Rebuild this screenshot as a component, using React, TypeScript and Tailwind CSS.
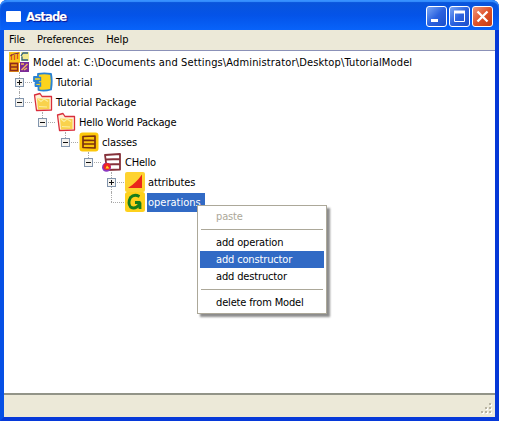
import React from "react";

type Kind = "root" | "component" | "folder" | "classes" | "klass" | "attributes" | "operations";

function Icon({ kind }: { kind: Kind }) {
  return (
    <svg className="h-5 w-5 shrink-0 overflow-visible" viewBox="0 0 20 20" fill="none">
      {kind === "root" && (
        <>
          <rect x="0" y="0" width="11" height="11" fill="#f8c61c" />
          <path d="M2.5 2v6M5.5 3v5M8.5 1v6" stroke="#d8561c" strokeWidth="1.3" />
          <path d="M1 4l4-2 5-1" stroke="#7a2a4c" />
          <rect x="12" y="0" width="8" height="9" fill="#f4ea90" />
          <path d="M19 1h-5l-2 3M13 4.5v3.5h6" stroke="#31607f" strokeWidth="1.3" />
          <rect x="0" y="10" width="10" height="10" fill="#ee9a16" />
          <path d="M1 11.5h8M1 15h8M1 18.5h8M1.5 11v8M8.5 11v8" stroke="#8c2a1c" strokeWidth="1.3" />
          <rect x="11" y="10" width="9" height="10" fill="#7a2a98" />
          <path d="M12 12h3M12.5 18l6-6M15 18l3-2" stroke="#f2b560" strokeWidth="1.5" />
        </>
      )}
      {kind === "component" && (
        <>
          <path d="M5 2Q11 .8 18 2Q19.5 9 18 17.5Q11 19.5 5.5 18V14H2.5V11H5V9H1V5H5Z" fill="#fbd31d" stroke="#2882d5" strokeWidth="1.8" strokeLinejoin="round" />
          <path d="M1.5 5.5h6v3h-6M2.5 11h5v3h-5" stroke="#2d83cf" strokeWidth="1.4" />
        </>
      )}
      {kind === "folder" && (
        <>
          <path d="M1.5 3l5.500-1.500 2 3h9.500v13.500L3.500 18.500z" fill="#fff0d5" stroke="#d92e3c" strokeWidth="1.3" strokeLinejoin="round" />
          <path d="M4 6.500l12.500.5v10L5 17.500z" fill="#f9d24c" />
          <path d="M5 7l3 2.500 3-2.500 4 2.500M6 14.500l8 .5" stroke="#fbeeA0" strokeWidth="1.2" />
        </>
      )}
      {kind === "classes" && (
        <>
          <rect x="0.5" y="0.5" width="19" height="19" rx="3" fill="#fcc70b" />
          <path d="M4 4.500l12-.5v12L4 15.500zM4 8.200l12 .3M4 12h12" stroke="#792f10" strokeWidth="1.7" strokeLinejoin="round" />
        </>
      )}
      {kind === "klass" && (
        <>
          <path d="M3 3l15-1v15.500l-13 .5zM4 7.500l14-.5M5 12.500l13-.5" fill="#fff" stroke="#85313a" strokeWidth="1.8" strokeLinejoin="round" />
          <circle cx="4.500" cy="15.200" r="4.500" fill="#8b39c2" />
          <circle cx="5" cy="14.500" r="3.600" fill="#ed2425" />
          <path d="M3.500 16.500l1.500-3 2.500 3z" fill="#ffd923" />
        </>
      )}
      {kind === "attributes" && (
        <>
          <rect x="0" y="0" width="20" height="20" rx="2" fill="#fed330" />
          <path d="M17 2.500v13.500H3Q11 11 17 2.500Z" fill="#ea271b" />
        </>
      )}
      {kind === "operations" && (
        <>
          <rect x="0" y="0" width="20" height="20" rx="2.500" fill="#fed11c" />
          <path d="M14.500 4.500Q9 1.500 5.500 5.500Q2.500 11 5.500 15Q10 18 14.500 12.500V10.500H10M15 10.500V17" stroke="#177d1b" strokeWidth="2.800" strokeLinejoin="round" />
        </>
      )}
    </svg>
  );
}

function Expander({ open }: { open: boolean }) {
  return (
    <svg className="relative h-[9px] w-[9px]" viewBox="0 0 9 9" shapeRendering="crispEdges">
      <rect x="0.5" y="0.5" width="8" height="8" fill="#f5f3ef" stroke="#8295ad" />
      <path d={open ? "M2 4.5h5" : "M2 4.5h5M4.5 2v5"} stroke="#111" />
    </svg>
  );
}

interface Node {
  text: string;
  kind: Kind;
  pad: string;
  tracking: string;
  toggle?: "open" | "closed";
  line?: string;
  selected?: boolean;
}

const nodes: Node[] = [
  { text: "Tutorial", kind: "component", pad: "pl-1", tracking: "tracking-[0.05px]", toggle: "closed", line: "h-5" },
  { text: "Tutorial Package", kind: "folder", pad: "pl-1", tracking: "tracking-[0px]", toggle: "open", line: "h-[10px]" },
  { text: "Hello World Package", kind: "folder", pad: "pl-[27px]", tracking: "tracking-[-0.17px]", toggle: "open", line: "h-[10px]" },
  { text: "classes", kind: "classes", pad: "pl-[50px]", tracking: "tracking-[-0.1px]", toggle: "open", line: "h-[10px]" },
  { text: "CHello", kind: "klass", pad: "pl-[73px]", tracking: "tracking-[-0.2px]", toggle: "open", line: "h-[10px]" },
  { text: "attributes", kind: "attributes", pad: "pl-24", tracking: "tracking-[-0.1px]", toggle: "closed", line: "h-5" },
  { text: "operations", kind: "operations", pad: "pl-24", tracking: "tracking-[0px]", line: "h-[10px]", selected: true },
];

function TreeRow({ node }: { node: Node }) {
  return (
    <div className={`flex h-5 items-center ${node.pad}`}>
      <div className="relative flex h-5 w-[23px] shrink-0 items-center justify-center">
        <span className={`absolute left-[11px] top-0 border-l border-dotted border-[#aaa] ${node.line}`} />
        <span className="absolute left-[11px] top-[10px] w-[13px] border-t border-dotted border-[#aaa]" />
        {node.toggle && <Expander open={node.toggle === "open"} />}
      </div>
      <div className="flex w-6 shrink-0 justify-center pr-px">
        <Icon kind={node.kind} />
      </div>
      <span className={`flex h-[19px] items-center pl-px pr-1 pt-px ${node.tracking} ${node.selected ? "bg-[#316ac5] text-white" : ""}`}>
        {node.text}
      </span>
    </div>
  );
}

function MenuItem({ text, state = "" }: { text: string; state?: string }) {
  return <div className={`flex h-[17px] items-center pl-4 ${state}`}>{text}</div>;
}

function Divider() {
  return (
    <div className="flex h-[9px] items-center px-px">
      <div className="h-px w-full bg-[#aca899]" />
    </div>
  );
}

function CaptionButton({ children, close }: { children: React.ReactNode; close?: boolean }) {
  return (
    <div className={`flex h-[21px] w-[21px] items-center justify-center rounded-[3px] border border-white bg-linear-to-br ${close ? "from-[#ef967b] via-[#df5228] to-[#c63d15]" : "from-[#7ba6f5] via-[#2b62df] to-[#1b4fcb]"}`}>
      <svg className="h-[19px] w-[19px]" viewBox="0 0 19 19" fill="none" stroke="white">{children}</svg>
    </div>
  );
}

export default function App() {
  return (
    <div className="relative h-[421px] w-[520px] overflow-hidden bg-white font-['DejaVu_Sans_Condensed','DejaVu_Sans',sans-serif] text-[11px] leading-[14px] text-black [font-stretch:condensed]">
      <div className="flex h-[421px] w-[499px] flex-col rounded-t-[7px] bg-[#0831d9]">
        <header className="flex h-[30px] shrink-0 items-center rounded-t-[7px] bg-linear-to-b from-[#0a55d9] via-[#0453e8] to-[#0863fa] pl-1.5 pr-1.5 pt-[3px] shadow-[inset_0_2px_1px_#3791ff]">
          <div className="h-[11px] w-[15px] rounded-[1px] bg-white" />
          <h1 className="ml-[5px] flex-1 text-[13px] font-bold tracking-[-0.9px] text-white [text-shadow:1px_1px_1px_#0f1089]">Astade</h1>
          <div className="flex gap-0.5">
            <CaptionButton><path d="M4 13.5h7" strokeWidth="3" /></CaptionButton>
            <CaptionButton><path d="M4.5 5v9.500h10V5" /><path d="M4 5h11" strokeWidth="3" /></CaptionButton>
            <CaptionButton close><path d="M4.500 4.500l10 10M14.500 4.500l-10 10" strokeWidth="2.300" /></CaptionButton>
          </div>
        </header>
        <div className="flex min-h-0 flex-1 flex-col border-x-4 border-b-4 border-l-[#0650e5] border-r-[#0538d7] border-b-[#0639d9]">
          <nav className="flex h-5 shrink-0 items-center gap-3 bg-[#ece9d8] pl-[5px]">
            <span className="tracking-[-0.1px]">File</span>
            <span className="tracking-[-0.1px]">Preferences</span>
            <span className="tracking-[-0.1px]">Help</span>
          </nav>
          <main className="min-h-0 flex-1 border-t border-[#8b91b8] bg-white pt-px">
            <div className="flex h-5 items-center pl-[5px]">
              <Icon kind="root" />
              <span className="ml-1 whitespace-nowrap pt-px tracking-[0.145px]">Model at: C:\Documents and Settings\Administrator\Desktop\TutorialModel</span>
            </div>
            {nodes.map((node) => <TreeRow key={node.text} node={node} />)}
          </main>
          <footer className="flex h-6 shrink-0 items-end justify-end border-t-2 border-[#929488] bg-[#ece9d8] p-0.5">
            <svg className="h-3 w-3" viewBox="0 0 12 12" shapeRendering="crispEdges">
              <path d="M9 1h2v2H9zM5 5h2v2H5zM9 5h2v2H9zM1 9h2v2H1zM5 9h2v2H5zM9 9h2v2H9z" fill="#fff" />
              <path d="M8 0h2v2H8zM4 4h2v2H4zM8 4h2v2H8zM0 8h2v2H0zM4 8h2v2H4zM8 8h2v2H8z" fill="#b8b4a2" />
            </svg>
          </footer>
        </div>
      </div>
      <div className="absolute left-[197px] top-[205px] w-[130px] border border-[#aca899] bg-white p-0.5 tracking-[-0.15px] shadow-[3px_3px_2px_rgba(0,0,0,0.45)]">
        <MenuItem text="paste" state="text-[#aca899]" />
        <Divider />
        <MenuItem text="add operation" />
        <MenuItem text="add constructor" state="bg-[#316ac5] text-white" />
        <MenuItem text="add destructor" />
        <Divider />
        <MenuItem text="delete from Model" />
      </div>
    </div>
  );
}
